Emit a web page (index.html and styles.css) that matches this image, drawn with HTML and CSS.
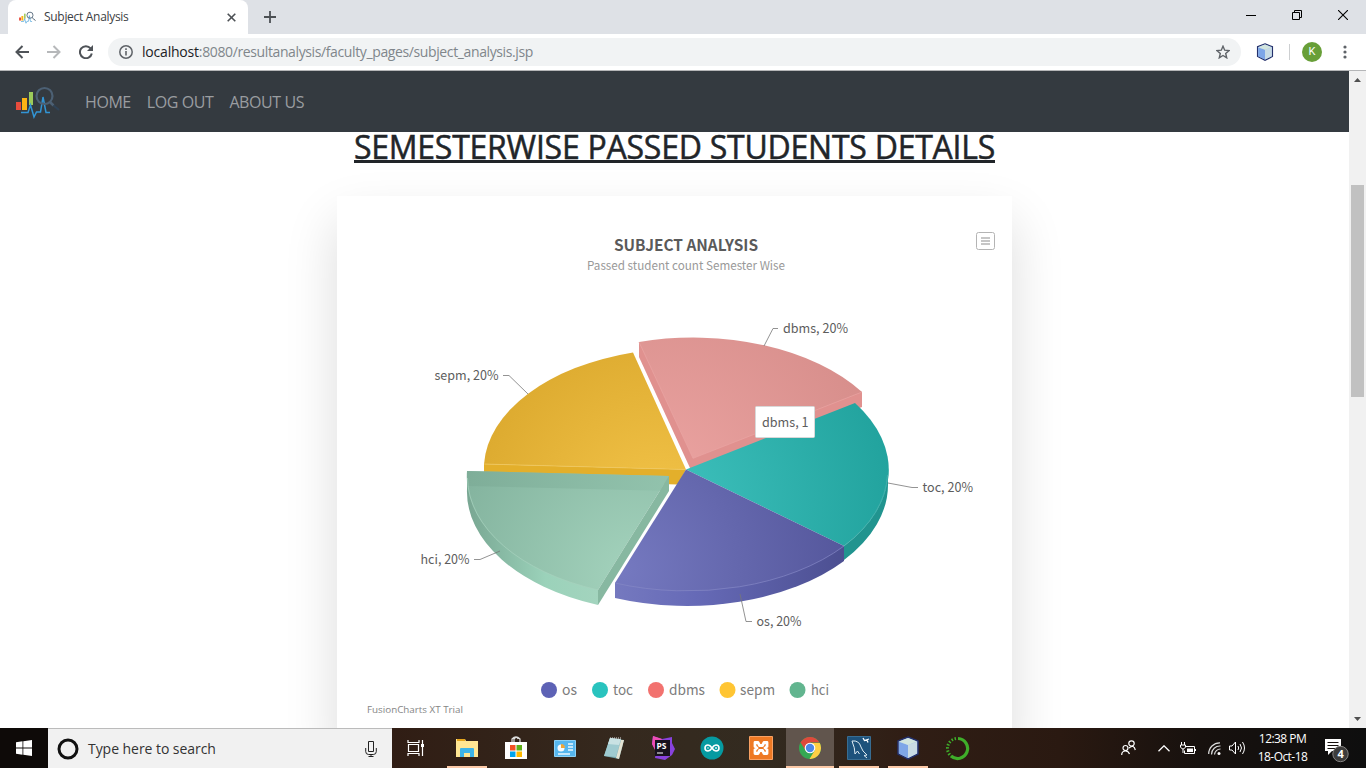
FILE: index.html
```html
<!DOCTYPE html>
<html lang="en">
<head>
<meta charset="utf-8">
<title>Subject Analysis</title>
<link rel="stylesheet" href="styles.css">
</head>
<body>
<svg class="defs" width="0" height="0">
  <defs>
    <symbol id="logo" viewBox="0 0 44 34">
      <rect x="0" y="17" width="5" height="8" fill="#e84c3d"/>
      <rect x="6" y="13" width="5" height="12" fill="#fdb414"/>
      <rect x="13" y="7" width="4" height="13" fill="#9ccb5a"/>
      <path d="M5 27.500H12L14.500 20 18 32 20.500 27H24.500L27 12 30 27.500H34" fill="none" stroke="#3295d5" stroke-width="1.500"/>
      <circle cx="28.500" cy="11" r="8" fill="none" stroke="#4c6074" stroke-width="2.200"/>
      <path d="M34 17L37.500 20.500" stroke="#4c6074" stroke-width="2.500"/>
      <path d="M37.500 20.500L43 25" stroke="#2f4357" stroke-width="2.200"/>
    </symbol>
    <symbol id="cube" viewBox="0 0 22 24">
      <path d="M11 1L21 5V18L11 23 1 18V5Z" fill="#a9c6e8" stroke="#24306b" stroke-width="1.500"/>
      <path d="M2 6L11 9V22L2 17.500Z" fill="#7ea6e8"/>
      <path d="M11 9L20 6V17.500L11 22Z" fill="#c9dbe4"/>
      <path d="M2 5.500L11 2 20 5.500 11 9Z" fill="#d2e5df"/>
    </symbol>
  </defs>
</svg>

<header class="tabs">
  <div class="tab">
    <svg class="favicon" width="17" height="13"><use href="#logo"/></svg>
    <span class="tab-title">Subject Analysis</span>
    <svg width="9" height="9" viewBox="0 0 9 9"><path d="M.7.7l7.600 7.600M8.300.7L.7 8.300" stroke="#4c5054" stroke-width="1.600"/></svg>
  </div>
  <svg class="new-tab" width="12" height="12" viewBox="0 0 12 12"><path d="M6 0V12M0 6H12" stroke="#4c5054" stroke-width="1.800"/></svg>
  <div class="window-buttons">
    <svg width="10" height="10" viewBox="0 0 10 10"><path d="M0 5.500H10" stroke="#000"/></svg>
    <svg width="10" height="10" viewBox="0 0 10 10"><path d="M.5 2.500h7v7h-7zM2.500 2.500v-2h7v7h-2" fill="none" stroke="#000"/></svg>
    <svg width="10" height="10" viewBox="0 0 10 10"><path d="M0 0L10 10M10 0L0 10" stroke="#000" stroke-width="1.100"/></svg>
  </div>
</header>

<div class="toolbar">
  <svg class="nav-icon" width="14" height="14" viewBox="0 0 14 14"><path d="M14 7H1.500M7.500 1L1.500 7l6 6" fill="none" stroke="#4f5358" stroke-width="2"/></svg>
  <svg class="nav-icon" width="14" height="14" viewBox="0 0 14 14"><path d="M0 7H12.500M6.500 1l6 6-6 6" fill="none" stroke="#b6b8ba" stroke-width="2"/></svg>
  <svg class="nav-icon" width="14" height="14" viewBox="0 0 14 14"><path d="M11.600 3.400A6 6 0 1 0 12.800 8.500" fill="none" stroke="#4f5358" stroke-width="2"/><path d="M14 0V6H8Z" fill="#4f5358"/></svg>
  <div class="address">
    <svg width="14" height="14" viewBox="0 0 14 14"><circle cx="7" cy="7" r="6.200" fill="none" stroke="#5f6368" stroke-width="1.500"/><path d="M7 6v4.500M7 3.300v1.600" stroke="#5f6368" stroke-width="1.600"/></svg>
    <span class="url"><b>localhost</b>:8080/resultanalysis/faculty_pages/subject_analysis.jsp</span>
    <svg width="14" height="14" viewBox="0 0 14 14"><path d="M7 1.200l1.700 4 4.300.4-3.300 2.900 1 4.300L7 10.500l-3.700 2.300 1-4.300L1 5.600l4.300-.4z" fill="none" stroke="#5f6368" stroke-width="1.400"/></svg>
  </div>
  <svg class="extension" width="18" height="18"><use href="#cube"/></svg>
  <span class="divider"></span>
  <span class="avatar">K</span>
  <svg class="kebab" width="4" height="14" viewBox="0 0 4 14" fill="#5f6368"><circle cx="2" cy="2" r="1.600"/><circle cx="2" cy="7" r="1.600"/><circle cx="2" cy="12" r="1.600"/></svg>
</div>

<div class="viewport">
  <div class="page">
    <nav class="navbar">
      <svg class="brand" width="44" height="34"><use href="#logo"/></svg>
      <a>HOME</a><a>LOG OUT</a><a>ABOUT US</a>
    </nav>
    <main class="content">
      <h2 class="heading"><span>SEMESTERWISE PASSED STUDENTS DETAILS</span></h2>
      <section class="card">
        <svg class="chart" width="675" height="532" viewBox="337 196 675 532">
          <defs>
            <radialGradient id="gold" gradientUnits="userSpaceOnUse" cx="660" cy="520" r="240"><stop offset="0" stop-color="#f4c54a"/><stop offset="1" stop-color="#d7a429"/></radialGradient>
            <radialGradient id="rose" gradientUnits="userSpaceOnUse" cx="660" cy="490" r="240"><stop offset="0" stop-color="#eca4a2"/><stop offset="1" stop-color="#d68d8a"/></radialGradient>
            <radialGradient id="teal" gradientUnits="userSpaceOnUse" cx="640" cy="510" r="260"><stop offset="0" stop-color="#42c5c1"/><stop offset="1" stop-color="#21a29d"/></radialGradient>
            <radialGradient id="indigo" gradientUnits="userSpaceOnUse" cx="620" cy="570" r="240"><stop offset="0" stop-color="#7579c0"/><stop offset="1" stop-color="#53559a"/></radialGradient>
            <radialGradient id="mint" gradientUnits="userSpaceOnUse" cx="640" cy="580" r="220"><stop offset="0" stop-color="#a5d4be"/><stop offset="1" stop-color="#80b09b"/></radialGradient>
            <linearGradient id="indigo-side"><stop offset="0" stop-color="#7579bf"/><stop offset=".35" stop-color="#666ab7"/><stop offset="1" stop-color="#4c4f91"/></linearGradient>
            <linearGradient id="mint-side"><stop offset="0" stop-color="#78a692"/><stop offset=".6" stop-color="#9bd2ba"/><stop offset="1" stop-color="#a3d4be"/></linearGradient>
            <linearGradient id="mint-back"><stop offset="0" stop-color="#7dac97"/><stop offset="1" stop-color="#91c2ac"/></linearGradient>
          </defs>
          <g class="title"><text x="614" y="251" textLength="144" lengthAdjust="spacingAndGlyphs">SUBJECT ANALYSIS</text></g>
          <g class="subtitle"><text x="587" y="270" textLength="198" lengthAdjust="spacingAndGlyphs">Passed student count Semester Wise</text></g>
          <rect x="976.500" y="232.500" width="18" height="17" rx="2" fill="#fff" stroke="#b4b4b4"/>
          <path d="M981 238H990M981 241H990M981 244H990" stroke="#c6c6c6" stroke-width="1.800"/>

          <path d="M639 342V357L690 468 693 473 862 407V392Z" fill="#e0918f"/>
          <path d="M693 458.300L639 342A202 121 0 0 1 862 392Z" fill="url(#rose)"/>
          <path d="M639 342L693 458.300 862 392" fill="none" stroke="#e9a5a3" stroke-width=".7"/>
          <path d="M484 464V479L678 484.500 686 469.500Z" fill="#e3af2b"/>
          <path d="M686 469.500L484 464A202 121 0 0 1 633 352.500Z" fill="url(#gold)"/>
          <path d="M484 464L686 469.500" stroke="#efc65c" stroke-width=".8"/>
          <path d="M888 469.500V484A202 121 0 0 1 844 560V546A202 121 0 0 0 888 469.500Z" fill="#21948f"/>
          <path d="M686 469.500L855 403A202 121 0 0 1 844 546Z" fill="url(#teal)"/>
          <path d="M887.500 475A202 121 0 0 1 844 546" fill="none" stroke="#52b4b0" stroke-width=".7"/>
          <path d="M615 583V598A202 121 0 0 0 844 561V546Z" fill="url(#indigo-side)"/>
          <path d="M686 469.500L844 546A202 121 0 0 1 615 583Z" fill="url(#indigo)"/>
          <path d="M844 546A202 121 0 0 1 615 583" fill="none" stroke="#8588c5" stroke-width=".7"/>
          <path d="M467 471V489A202 121 0 0 0 598 605V590Z" fill="url(#mint-side)"/>
          <path d="M669 476L467 471A202 121 0 0 0 598 590Z" fill="url(#mint)"/>
          <path d="M467 471L669 476V491L467 486Z" fill="url(#mint-back)" opacity=".8"/>
          <path d="M669 476V491L598 605V590Z" fill="#87b8a1"/>
          <path d="M467.500 478A202 121 0 0 0 598 590" fill="none" stroke="#a8d2be" stroke-width=".7"/>

          <path class="lead" d="M778 328.500H773L764 346M503 375.500H509L528 394M888 483L912 487.500H918M740 594L746 621.500H752M474 559.500H480L500 551"/>
          <g class="label">
            <text x="783" y="333" textLength="65" lengthAdjust="spacingAndGlyphs">dbms, 20%</text>
            <text x="434.500" y="380" textLength="64" lengthAdjust="spacingAndGlyphs">sepm, 20%</text>
            <text x="922.500" y="492" textLength="50.500" lengthAdjust="spacingAndGlyphs">toc, 20%</text>
            <text x="756.500" y="626" textLength="45" lengthAdjust="spacingAndGlyphs">os, 20%</text>
            <text x="420.500" y="564" textLength="49" lengthAdjust="spacingAndGlyphs">hci, 20%</text>
          </g>
          <rect x="755.500" y="406.500" width="59" height="31" rx="1" fill="#fff" stroke="#d8d8d8"/>
          <g class="label"><text x="762" y="427" textLength="46.500" lengthAdjust="spacingAndGlyphs">dbms, 1</text></g>

          <circle cx="549" cy="690" r="8" fill="#5d62b5"/><circle cx="600" cy="690" r="8" fill="#29c3be"/><circle cx="656" cy="690" r="8" fill="#f2726f"/><circle cx="727.500" cy="690" r="8" fill="#ffc533"/><circle cx="797.500" cy="690" r="8" fill="#62b58f"/>
          <g class="legend">
            <text x="562" y="695" textLength="15" lengthAdjust="spacingAndGlyphs">os</text>
            <text x="613" y="695" textLength="20" lengthAdjust="spacingAndGlyphs">toc</text>
            <text x="669" y="695" textLength="36" lengthAdjust="spacingAndGlyphs">dbms</text>
            <text x="740" y="695" textLength="35" lengthAdjust="spacingAndGlyphs">sepm</text>
            <text x="811" y="695" textLength="18" lengthAdjust="spacingAndGlyphs">hci</text>
          </g>
          <g class="credit"><text x="367" y="713" textLength="96" lengthAdjust="spacingAndGlyphs">FusionCharts XT Trial</text></g>
        </svg>
      </section>
    </main>
  </div>
  <aside class="scrollbar">
    <svg width="7" height="4"><path d="M0 4L3.500 0 7 4Z" fill="#505050"/></svg>
    <span class="thumb"></span>
    <svg class="down" width="7" height="4"><path d="M0 0L3.500 4 7 0Z" fill="#505050"/></svg>
  </aside>
</div>

<footer class="taskbar">
  <div class="start"><svg width="16" height="16" viewBox="0 0 16 16" fill="#fff"><path d="M0 2.200L6.500 1.300V7.600H0ZM7.300 1.200L16 0V7.600H7.300ZM0 8.400H6.500V14.700L0 13.800ZM7.300 8.400H16V16L7.300 14.800Z"/></svg></div>
  <div class="search">
    <svg width="22" height="22" viewBox="0 0 22 22"><circle cx="11" cy="11" r="9" fill="none" stroke="#111" stroke-width="3"/></svg>
    <span>Type here to search</span>
    <svg width="12" height="16" viewBox="0 0 12 16"><path d="M3.500.5h5v10h-5zM.7 7v3.500q0 3 3 3h4.600q3 0 3-3V7M6 13.500v2M3.500 15.500h5" fill="none" stroke="#222"/></svg>
  </div>
  <div class="apps">
    <span class="app first"><svg width="18" height="18" viewBox="0 0 18 18"><path d="M1 1v2.500h11V1M1 17v-2.500h11V17M1.500 5.500h10v7h-10zM15.500 1v16" fill="none" stroke="#fff" stroke-width="1.200"/><path d="M14 5h3v3h-3z" fill="#fff"/></svg></span>
    <span class="app open"><svg width="22" height="20" viewBox="0 0 22 20"><path d="M0 1h9l1 2h12v16H0Z" fill="#ffe693"/><path d="M1 2h8" stroke="#e4a51d" stroke-width="2"/><path d="M4 19v-8q0-1 1-1h12q1 0 1 1v8h-4v-4H8v4Z" fill="#3cb4e8"/></svg></span>
    <span class="app"><svg width="24" height="24" viewBox="0 0 24 24"><path d="M8 7V3q4-4 8 0v4M10 6V3q3-3 4 0" fill="none" stroke="#ddd" stroke-width="1.200"/><path d="M1 6h22v17H1z" fill="#fff"/><path d="M6 9h5.500v5.500H6z" fill="#f25022"/><path d="M12.500 9H18v5.500h-5.500z" fill="#5eae16"/><path d="M6 15.500h5.500V21H6z" fill="#00a4ef"/><path d="M12.500 15.500H18V21h-5.500z" fill="#ffb900"/></svg></span>
    <span class="app"><svg width="22" height="17" viewBox="0 0 22 17"><path d="M.5.5h21v16H.5z" fill="#56b6ee" stroke="#8bd1f7"/><circle cx="7" cy="8" r="3.500" fill="#f5f9fc"/><path d="M7 8V4A4 4 0 0 1 11 8Z" fill="#efa639"/><path d="M14 4h5M14 7h5M14 10h5M4 14h12" stroke="#eaf7ff" stroke-width="1.500"/></svg></span>
    <span class="app"><svg width="24" height="24" viewBox="0 0 24 24"><path d="M8 2L22 4 17 23 2 20Z" fill="#72a4aa"/><path d="M8 2L19 4 14 21 2 20Z" fill="#9fcbd0"/><path d="M8 2L19 3 17 9 6 8Z" fill="#c9e2e3"/><path d="M19 4h3L17 23l-3-1z" fill="#e4e3d2"/><path d="M8 2h12" stroke="#ddd" stroke-dasharray="1 1"/></svg></span>
    <span class="app"><svg width="24" height="24" viewBox="0 0 24 24"><path d="M2 0l9 3 10-2v6l3 6-3 6-7 5-10-2 1-7L1 8Z" fill="#8842dd"/><path d="M2 0l9 3-7 11L1 8Z" fill="#ed4db4"/><path d="M4 4h15v16H4z" fill="#17121d"/><path d="M6 17h6" stroke="#fff"/><text x="5.500" y="13" class="ps">PS</text></svg></span>
    <span class="app"><svg width="24" height="24" viewBox="0 0 24 24"><circle cx="12" cy="12" r="11.500" fill="#069aa1"/><path d="M12 12c-2-3-3-3-4-3a3 3 0 1 0 0 6c1 0 2 0 4-3s3-3 4-3a3 3 0 1 1 0 6c-1 0-2 0-4-3" fill="none" stroke="#fff" stroke-width="1.600"/><path d="M7 12h2M15 12h2M16 11v2" stroke="#fff" stroke-width=".8"/></svg></span>
    <span class="app"><svg width="24" height="24" viewBox="0 0 24 24"><path d="M.5.5h23v23H.5z" fill="#ee7924" stroke="#f9a163"/><path d="M9 6.500H6v4l2 1.500-2 1.500v4h3l1.500-3h3l1.500 3h3v-4L16 12l2-1.500v-4h-3l-1.500 3h-3Z" fill="none" stroke="#fff" stroke-width="2.800" stroke-linejoin="round"/></svg></span>
    <span class="app open current"><svg width="22" height="22" viewBox="0 0 22 22"><circle cx="11" cy="11" r="11" fill="#35a853"/><path d="M11 11L1.500 5.500A11 11 0 0 1 20.500 5.500H11Z" fill="#df493c"/><path d="M11 6H20.800A11 11 0 0 1 10.500 22L16 13Z" fill="#fecf45"/><path d="M1.500 5.500L7 14 11 6Z" fill="#df493c"/><circle cx="11" cy="11" r="5.300" fill="#fff"/><circle cx="11" cy="11" r="4.200" fill="#4d87e8"/></svg></span>
    <span class="app open"><svg width="24" height="24" viewBox="0 0 24 24"><path d="M.5.5h23v23H.5z" fill="#1d527c" stroke="#386d92"/><path d="M5 5q7-1 9 6 1 4 6 8l-3 .5 3 2.500M5 5q3 7 3 13l2.500-3 2 3" fill="none" stroke="#dceaf2" stroke-width="1"/><path d="M16 2l1.500 2.500 2.500-.5 1 2.500M17.500 4.500L22 3" fill="none" stroke="#fff" stroke-width="1.300"/></svg></span>
    <span class="app open"><svg width="22" height="24"><use href="#cube"/></svg></span>
    <span class="app"><svg width="25" height="25" viewBox="0 0 25 25"><path d="M13 2.500A10 10 0 1 1 6 20" fill="none" stroke="#3fae2a" stroke-width="3.200"/><path d="M11 2.500A10 10 0 0 0 6 20" fill="none" stroke="#3fae2a" stroke-width="3" stroke-dasharray="1.500 1.700"/></svg></span>
  </div>
  <div class="tray">
    <svg class="people" width="15" height="16" viewBox="0 0 15 16"><g fill="none" stroke="#fff" stroke-width="1.200"><circle cx="10.500" cy="3.500" r="2.700"/><circle cx="4.500" cy="8" r="2.500"/><path d="M.7 15q0-4 3.800-4 3 0 4 3M8 8q5-4 6.300 2"/></g></svg>
    <svg class="chevron" width="12" height="7" viewBox="0 0 12 7"><path d="M.5 6.300L6 .8l5.500 5.500" fill="none" stroke="#fff" stroke-width="1.300"/></svg>
    <svg class="battery" width="17" height="13" viewBox="0 0 17 13"><path d="M5 4.500h9.500v7H4.500v-3M15.500 7v2M1.500 0v3M4.500 0v3M.5 3h5v2q-1 2-2.500 2T.5 5zM3 7v4" fill="none" stroke="#fff"/><path d="M7 6.500h6V10H7z" fill="#fff"/></svg>
    <svg class="wifi" width="13" height="13" viewBox="0 0 13 13"><path d="M.7 12A11 11 0 0 1 12 .8M3.500 12.500A8.500 8.500 0 0 1 12.500 4M6.500 12.500A6 6 0 0 1 12.500 7" fill="none" stroke="#ddd" stroke-width="1.200"/><circle cx="11" cy="11.500" r="1.500" fill="#fff"/></svg>
    <svg class="volume" width="17" height="14" viewBox="0 0 17 14"><path d="M.5 5h2.500L6.500 1v12L3 9H.5zM9 5q1.300 2 0 4M11 3q3 4 0 8M13.500 1q4 6 0 12" fill="none" stroke="#fff"/></svg>
    <div class="clock"><span>12:38 PM</span><span>18-Oct-18</span></div>
    <svg class="notify" width="25" height="25" viewBox="0 0 25 25"><path d="M1 1h16v12H8l-4 4v-4H1z" fill="#fff"/><path d="M3.500 4.500h11M3.500 7.500h11M3.500 10.500h8" stroke="#17110e"/><circle cx="16.500" cy="16" r="7.700" fill="#3d3c3b" stroke="#858381"/><text x="13.400" y="20.300" class="count">4</text></svg>
  </div>
</footer>
</body>
</html>
```
FILE: styles.css
```css
* { box-sizing: border-box; }
body { margin: 0; width: 1366px; height: 768px; overflow: hidden; display: flex; flex-direction: column; background: #fff; font-family: "Open Sans", "Noto Sans", sans-serif; }
svg { display: block; flex: none; }
.defs { position: absolute; }

.tabs { height: 34px; flex: none; display: flex; align-items: center; background: #dee1e6; padding-left: 8px; }
.tab { width: 240px; height: 34px; display: flex; align-items: center; padding: 0 12px 0 11px; background: #fff; border-radius: 8px 8px 0 0; }
.tab-title { flex: 1; margin-left: 8px; padding-bottom: 1px; font-size: 12px; letter-spacing: -.3px; color: #3c4043; }
.new-tab { margin-left: 16px; }
.window-buttons { margin-left: auto; display: flex; gap: 36px; padding: 0 18px 5px 0; }

.toolbar { height: 37px; flex: none; display: flex; align-items: center; padding: 0 19px 0 15px; border-bottom: 1px solid #b5b6b8; }
.nav-icon { margin-right: 18px; }
.address { width: 1133px; height: 28px; margin-left: -3px; display: flex; align-items: center; padding: 0 11px; border-radius: 14px; background: #f1f3f4; }
.url { flex: 1; margin-left: 9px; padding-bottom: 2px; font-size: 14px; letter-spacing: -.38px; color: #80868b; white-space: nowrap; }
.url b { font-weight: 400; color: #202124; letter-spacing: -.2px; }
.extension { margin-left: 15px; }
.divider { width: 1px; height: 16px; margin-left: 15px; background: #cdcfd1; }
.avatar { width: 20px; height: 20px; margin-left: 12px; border-radius: 50%; background: #689f38; color: #fff; font: 11px/20px Roboto, sans-serif; text-align: center; }
.kebab { margin-left: auto; }

.viewport { height: 657px; flex: none; display: flex; overflow: hidden; }
.page { width: 1349px; display: flex; flex-direction: column; }
.navbar { height: 61px; flex: none; display: flex; align-items: center; padding: 0 16px; background: #343a40; color: #9a9da0; font-size: 16px; letter-spacing: -.42px; position: relative; z-index: 1; }
.navbar a { margin-right: 16px; }
.brand { margin-right: 25px; }
.content { display: flex; flex-direction: column; align-items: center; }
.heading { margin: 0; height: 64px; font-size: 32px; line-height: 30px; font-weight: 400; letter-spacing: -.24px; -webkit-text-stroke: .5px #212529; color: #212529; text-align: center; white-space: nowrap; }
.heading span { border-bottom: 3px solid #212529; display: block; height: 31px; }
.card { width: 675px; height: 552px; flex: none; background: #fff; box-shadow: 0 25px 50px rgba(0,0,0,.14); }

.chart text { font-family: "Noto Sans CJK SC", sans-serif; }
.title { font-size: 16px; font-weight: 700; fill: #5a5a5a; }
.subtitle { font-size: 12px; fill: #999; }
.label { font-size: 13px; fill: #5d5d5d; }
.legend { font-size: 14px; fill: #7c7c7c; }
.chart .credit text { font-size: 9.500px; fill: #858585; font-family: "Open Sans", sans-serif; }
.lead { fill: none; stroke: #777; stroke-width: .8; }

.scrollbar { width: 17px; display: flex; flex-direction: column; align-items: center; padding: 7px 0; background: #f1f1f1; }
.thumb { width: 13px; height: 212px; margin-top: 103px; background: #c1c1c1; }
.down { margin-top: auto; }

.taskbar { height: 40px; flex: none; display: flex; color: #fff; background: linear-gradient(90deg, #0e0a08 0, #0e0a08 48px, #301d14 392px, #35291e 620px, #332b20 760px, #301e15 900px, #2a1911 1060px, #17110e 1200px, #0e0e0e 1366px); }
.start { width: 48px; display: flex; align-items: center; justify-content: center; }
.search { width: 344px; display: flex; align-items: center; padding: 0 15px 0 9px; background: #f1f1f1; border-top: 1px solid #bbb; color: #333; font-size: 14px; letter-spacing: -.05px; }
.search span { flex: 1; margin-left: 9px; white-space: nowrap; }
.apps { display: flex; gap: 1px; }
.app { width: 48px; height: 40px; display: flex; align-items: center; justify-content: center; }
.first { margin-right: 2px; }
.open { background: linear-gradient(#fcc9a7, #fcc9a7) center bottom / 40px 2px no-repeat; }
.current { background-color: #61554d; background-size: 48px 2px; }
.ps { font: bold 8.500px "Open Sans", sans-serif; fill: #fff; }
.tray { margin-left: auto; display: flex; align-items: center; padding-right: 17px; }
.people { margin-right: 22px; }
.chevron { margin-right: 10px; }
.battery { margin-right: 11px; }
.wifi { margin-right: 8px; }
.clock { width: 55px; margin-left: 9px; display: flex; flex-direction: column; align-items: center; font-size: 12px; line-height: 18px; letter-spacing: -.55px; white-space: nowrap; }
.notify { margin-left: 14px; margin-top: 4px; }
.count { font: bold 11px "Open Sans", sans-serif; fill: #fff; }
```
